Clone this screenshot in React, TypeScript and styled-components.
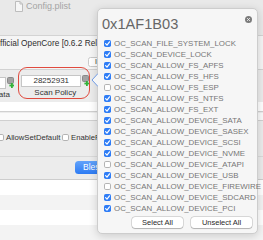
import styled, { createGlobalStyle } from 'styled-components'

const GlobalStyle = createGlobalStyle`
  html, body {
    margin: 0;
    padding: 0;
  }
  body {
    width: 263px;
    height: 240px;
    overflow: hidden;
    background: #ececec;
    font-family: 'Liberation Sans', Arial, sans-serif;
  }
`

const flags: [string, boolean][] = [
  ['OC_SCAN_FILE_SYSTEM_LOCK', true],
  ['OC_SCAN_DEVICE_LOCK', true],
  ['OC_SCAN_ALLOW_FS_APFS', true],
  ['OC_SCAN_ALLOW_FS_HFS', true],
  ['OC_SCAN_ALLOW_FS_ESP', false],
  ['OC_SCAN_ALLOW_FS_NTFS', true],
  ['OC_SCAN_ALLOW_FS_EXT', true],
  ['OC_SCAN_ALLOW_DEVICE_SATA', true],
  ['OC_SCAN_ALLOW_DEVICE_SASEX', true],
  ['OC_SCAN_ALLOW_DEVICE_SCSI', true],
  ['OC_SCAN_ALLOW_DEVICE_NVME', true],
  ['OC_SCAN_ALLOW_DEVICE_ATAPI', false],
  ['OC_SCAN_ALLOW_DEVICE_USB', true],
  ['OC_SCAN_ALLOW_DEVICE_FIREWIRE', false],
  ['OC_SCAN_ALLOW_DEVICE_SDCARD', true],
  ['OC_SCAN_ALLOW_DEVICE_PCI', true],
]

function DocIcon() {
  return (
    <svg width='8' height='11' viewBox='0 0 8 11'>
      <path d='M0.5 0.5 H5 L7.5 3 V10.5 H0.5 Z' fill='#f6f6f6' stroke='#bdbdbd' />
      <path d='M5 0.5 V3 H7.5' fill='none' stroke='#bdbdbd' />
    </svg>
  )
}

function StepperIcon() {
  return (
    <svg width='7' height='11' viewBox='0 0 7 11'>
      <rect x='0.5' y='0.5' width='6' height='6' rx='1' fill='#a3a3a3' stroke='#8a8a8a' />
      <rect x='4' y='6' width='1.8' height='5' fill='#35b13a' />
      <rect x='2.4' y='7.6' width='5' height='1.8' fill='#35b13a' />
    </svg>
  )
}

function Tick() {
  return (
    <svg width='7' height='7' viewBox='0 0 7 7'>
      <path d='M1.6 3.7 L3 5.1 L5.5 1.8' fill='none' stroke='#fff' strokeWidth='1.2' strokeLinecap='round' strokeLinejoin='round' />
    </svg>
  )
}

export default function App() {
  return (
    <Stage>
      <GlobalStyle />
      <Window>
        <TitleBar>
          <DocIcon />
          <TitleText>Config.plist</TitleText>
        </TitleBar>
        <InfoBar>
          <InfoText>fficial OpenCore [0.6.2 Release]</InfoText>
          <SmallButton>Info</SmallButton>
        </InfoBar>
        <FieldRow>
          <FieldGroup $align='flex-end' $offset={-44} $top={7}>
            <FieldLine>
              <Input $w={50} />
              <StepperIcon />
            </FieldLine>
            <FieldLabel $right={4}>Data</FieldLabel>
          </FieldGroup>
          <Highlight>
            <FieldGroup $align='center' $offset={0} $top={0}>
              <FieldLine>
                <Input $w={60}>28252931</Input>
                <StepperIcon />
              </FieldLine>
              <FieldLabel $right={0}>Scan Policy</FieldLabel>
            </FieldGroup>
          </Highlight>
        </FieldRow>
        <Band $h={9} $bg='#ffffff' $gap={0} />
        <Band $h={7} $bg='#fafafa' $gap={1} />
        <CheckRow>
          <CheckItem $w={65} $shift={-3}>
            <Box $on={false} />
            <CheckLabel>AllowSetDefault</CheckLabel>
          </CheckItem>
          <CheckItem $w={35} $shift={0}>
            <Box $on={false} />
            <CheckLabel>EnablePassword</CheckLabel>
          </CheckItem>
        </CheckRow>
        <ButtonBar>
          <BlueButton>Bless</BlueButton>
        </ButtonBar>
        <Table>
          {[0, 1, 2, 3].map((i) => (
            <TableRow key={i} $odd={i % 2 === 1} />
          ))}
        </Table>
      </Window>

      <Popover>
        <Arrow width='7' height='14' viewBox='0 0 7 14'>
          <path d='M7 0.5 L1 7 L7 13.5' fill='#f6f6f6' stroke='#6f9be6' strokeWidth='1' />
        </Arrow>
        <PopHeader>
          <PopTitle>0x1AF1B03</PopTitle>
          <CloseDot>
            <svg width='7' height='7' viewBox='0 0 7 7'>
              <circle cx='3.5' cy='3.5' r='3.5' fill='#7b7b7b' />
              <path d='M2.2 2.2 L4.8 4.8 M4.8 2.2 L2.2 4.8' stroke='#f2f2f2' strokeWidth='1' />
            </svg>
          </CloseDot>
        </PopHeader>
        <FlagList>
          {flags.map(([name, on]) => (
            <FlagRow key={name}>
              <Box $on={on}>{on && <Tick />}</Box>
              <FlagName>{name}</FlagName>
            </FlagRow>
          ))}
        </FlagList>
        <PopButtons>
          <PopButton $w={51}>Select All</PopButton>
          <PopButton $w={61}>Unselect All</PopButton>
        </PopButtons>
      </Popover>
    </Stage>
  )
}

const Stage = styled.div`
  position: relative;
  width: 263px;
  height: 240px;
  overflow: hidden;
`

const Window = styled.div`
  display: flex;
  flex-direction: column;
  width: 100%;
  height: 100%;
  background: #ececec;
`

const TitleBar = styled.div`
  display: flex;
  align-items: flex-start;
  gap: 3px;
  height: 36px;
  padding: 1px 0 0 15px;
  box-sizing: border-box;
  background: #e9e9e9;
  border-bottom: 1px solid #d3d3d3;
`

const TitleText = styled.span`
  font-size: 9px;
  line-height: 11px;
  color: #a4a4a4;
`

const InfoBar = styled.div`
  display: flex;
  flex-direction: column;
  align-items: flex-start;
  height: 34px;
  box-sizing: border-box;
  background: #f5f5f5;
  border-bottom: 1px solid #d2d2d2;
`

const InfoText = styled.div`
  margin-top: 2px;
  font-size: 8.3px;
  line-height: 10px;
  color: #2e2e2e;
  white-space: nowrap;
`

const SmallButton = styled.div`
  margin: 9px 0 0 88px;
  width: 40px;
  height: 10px;
  box-sizing: border-box;
  padding-left: 6px;
  background: #fff;
  border: 1px solid #c9c9c9;
  border-radius: 2.5px;
  font-size: 7px;
  line-height: 8px;
  color: #333;
`

const FieldRow = styled.div`
  display: flex;
  align-items: flex-start;
  height: 33px;
`

const FieldGroup = styled.div<{ $align: string; $offset: number; $top: number }>`
  display: flex;
  flex-direction: column;
  align-items: ${(p) => p.$align};
  margin-left: ${(p) => p.$offset}px;
  margin-top: ${(p) => p.$top}px;
`

const FieldLine = styled.div`
  display: flex;
  align-items: flex-start;
  gap: 1px;
`

const Input = styled.div<{ $w: number }>`
  width: ${(p) => p.$w}px;
  height: 12px;
  box-sizing: border-box;
  background: #fff;
  border: 1px solid #c6c6c6;
  font-size: 8px;
  line-height: 10px;
  text-align: center;
  color: #333;
`

const FieldLabel = styled.div<{ $right: number }>`
  margin: 1px ${(p) => p.$right}px 0 0;
  font-size: 8px;
  line-height: 10px;
  color: #333;
`

const Highlight = styled.div`
  position: relative;
  z-index: 1;
  width: 72px;
  height: 32px;
  margin: -3px 0 0 4px;
  padding: 7.5px 0 0 2.5px;
  box-sizing: border-box;
  border: 1.5px solid #e04a3e;
  border-radius: 9px;
`

const Band = styled.div<{ $h: number; $bg: string; $gap: number }>`
  height: ${(p) => p.$h}px;
  margin-top: ${(p) => p.$gap}px;
  background: ${(p) => p.$bg};
  border-bottom: 1px solid #d0d0d0;
`

const CheckRow = styled.div`
  display: flex;
  align-items: center;
  height: 11px;
  margin-top: 11px;
`

const CheckItem = styled.div<{ $w: number; $shift: number }>`
  display: flex;
  align-items: center;
  gap: 2px;
  flex: none;
  overflow: hidden;
  width: ${(p) => p.$w}px;
  margin-left: ${(p) => p.$shift}px;
`

const CheckLabel = styled.span`
  font-size: 7.7px;
  line-height: 10px;
  color: #333;
  white-space: nowrap;
`

const Box = styled.span<{ $on: boolean }>`
  display: flex;
  flex: none;
  width: 7px;
  height: 7px;
  box-sizing: border-box;
  border-radius: 1.8px;
  background: ${(p) => (p.$on ? '#2f7df6' : '#ffffff')};
  border: ${(p) => (p.$on ? 'none' : '0.8px solid #b3b3b3')};
`

const ButtonBar = styled.div`
  display: flex;
  height: 23px;
  margin-top: 13px;
  padding: 4px 0 0 75px;
  box-sizing: border-box;
  border-top: 1px solid #dadada;
`

const BlueButton = styled.div`
  width: 60px;
  height: 13px;
  padding-left: 8px;
  box-sizing: border-box;
  border-radius: 3.5px;
  background: linear-gradient(#62a3fa, #2d7bf4);
  font-size: 8.5px;
  line-height: 13px;
  color: #fff;
`

const Table = styled.div`
  display: flex;
  flex-direction: column;
  flex: 1;
  border-top: 1px solid #cdcdcd;
`

const TableRow = styled.div<{ $odd: boolean }>`
  height: 15px;
  flex: none;
  background: ${(p) => (p.$odd ? '#f3f3f3' : '#ffffff')};
`

const Popover = styled.div`
  position: absolute;
  left: 97px;
  top: 8px;
  width: 161px;
  height: 226px;
  box-sizing: border-box;
  display: flex;
  flex-direction: column;
  padding: 5.5px 4px 5px 4px;
  background: #f6f6f6;
  border: 1px solid #cdcdcd;
  border-radius: 5px;
  box-shadow: 0 2px 8px rgba(0, 0, 0, 0.16);
`

const Arrow = styled.svg`
  position: absolute;
  left: -7px;
  top: 64px;
`

const PopHeader = styled.div`
  display: flex;
  justify-content: space-between;
  align-items: flex-start;
  height: 18px;
`

const PopTitle = styled.div`
  font-size: 14.6px;
  line-height: 18px;
  color: #666;
`

const CloseDot = styled.div`
  display: flex;
  margin: 1px 1.5px 0 0;
`

const FlagList = styled.div`
  display: flex;
  flex-direction: column;
  margin-top: 5px;
  padding-left: 2px;
`

const FlagRow = styled.div`
  display: flex;
  align-items: center;
  gap: 3px;
  height: 11px;
`

const FlagName = styled.span`
  font-size: 7.9px;
  line-height: 11px;
  color: #777;
  white-space: nowrap;
`

const PopButtons = styled.div`
  display: flex;
  justify-content: flex-end;
  gap: 8px;
  margin-top: 3.5px;
  padding-right: 1px;
`

const PopButton = styled.div<{ $w: number }>`
  width: ${(p) => p.$w}px;
  height: 11px;
  background: #fff;
  border-radius: 3px;
  box-shadow: 0 0 0 0.5px rgba(0, 0, 0, 0.22), 0 0.5px 1px rgba(0, 0, 0, 0.18);
  font-size: 7.5px;
  line-height: 11px;
  text-align: center;
  color: #2a2a2a;
`
